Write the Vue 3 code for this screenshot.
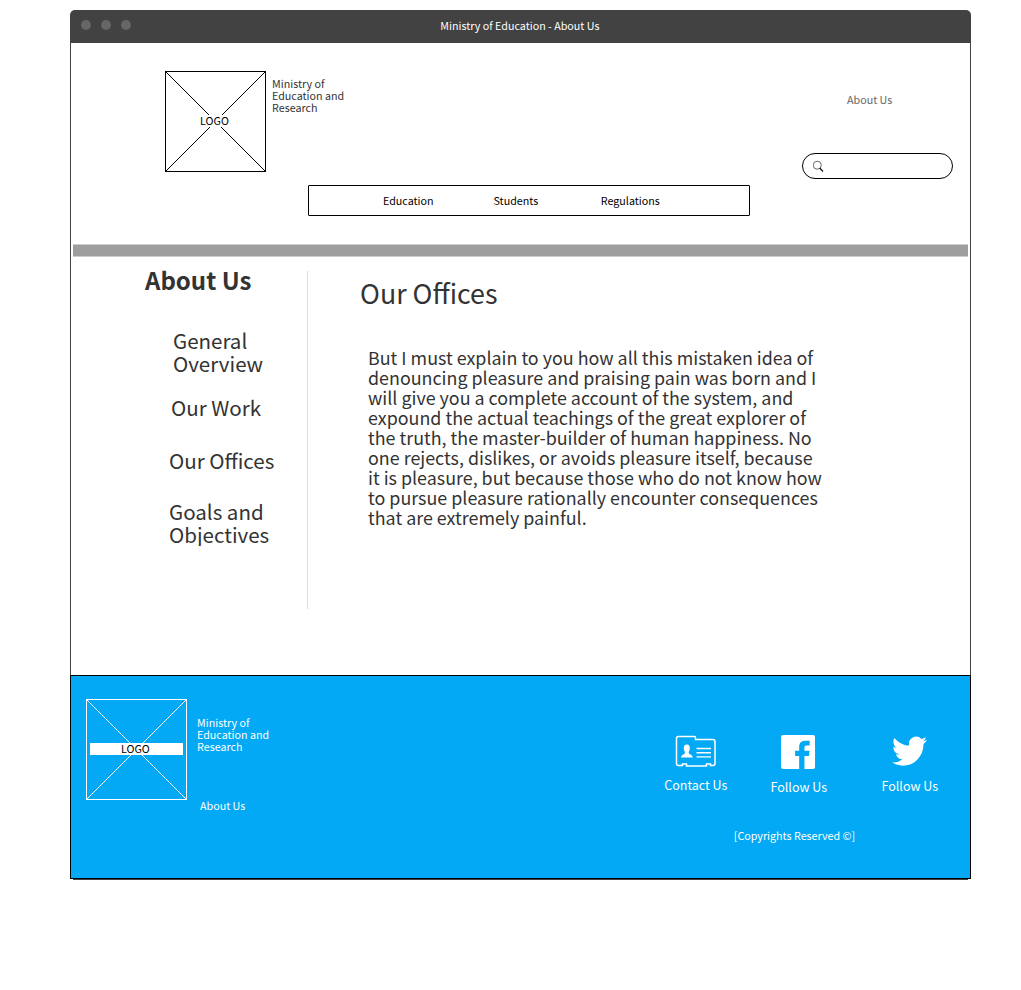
<script setup>
const nav = ['Education', 'Students', 'Regulations']
const sections = [
  { id: 'general', lines: ['General', 'Overview'] },
  { id: 'work', lines: ['Our Work'] },
  { id: 'offices', lines: ['Our Offices'] },
  { id: 'goals', lines: ['Goals and', 'Objectives'] },
]
const paragraph = [
  'But I must explain to you how all this mistaken idea of',
  'denouncing pleasure and praising pain was born and I',
  'will give you a complete account of the system, and',
  'expound the actual teachings of the great explorer of',
  'the truth, the master-builder of human happiness. No',
  'one rejects, dislikes, or avoids pleasure itself, because',
  'it is pleasure, but because those who do not know how',
  'to pursue pleasure rationally encounter consequences',
  'that are extremely painful.',
]
</script>

<template>
  <div class="window">
    <div class="titlebar">
      <div class="dots"><i></i><i></i><i></i></div>
      <span class="title">Ministry of Education - About Us</span>
    </div>

    <header class="header">
      <div class="top">
        <div class="logo">
          <svg width="101" height="101" viewBox="0 0 101 101">
            <path d="M.5 .5L100.5 100.5M100.5 .5L.5 100.5" />
            <rect x=".5" y=".5" width="100" height="100" />
          </svg>
          <span class="logo-label">LOGO</span>
        </div>
        <div class="org">Ministry of<br />Education and<br />Research</div>
        <div class="tools">
          <a class="about">About Us</a>
          <div class="search">
            <svg width="12" height="12" viewBox="0 0 12 12">
              <circle cx="4.3" cy="5.2" r="4" fill="none" stroke="#444" stroke-width=".8" />
              <path d="M6.7 8L10 11.5" stroke="#111" stroke-width="1.2" />
            </svg>
          </div>
        </div>
      </div>
      <nav class="nav">
        <a v-for="item in nav" :key="item">{{ item }}</a>
      </nav>
    </header>

    <main class="main">
      <div class="rule"></div>
      <div class="columns">
        <aside class="side">
          <h1>About Us</h1>
          <a v-for="s in sections" :key="s.id" :class="s.id">
            <span v-for="l in s.lines" :key="l">{{ l }}</span>
          </a>
        </aside>
        <div class="divider"></div>
        <article class="content">
          <h2>Our Offices</h2>
          <p><span v-for="l in paragraph" :key="l">{{ l }}</span></p>
        </article>
      </div>
    </main>

    <footer class="footer">
      <div class="logo light">
        <svg width="101" height="101" viewBox="0 0 101 101">
          <path d="M.5 .5L100.5 100.5M100.5 .5L.5 100.5" />
          <rect x=".5" y=".5" width="100" height="100" />
        </svg>
        <span class="logo-label">LOGO</span>
      </div>
      <div class="foot-org">
        <div>Ministry of<br />Education and<br />Research</div>
        <a>About Us</a>
      </div>
      <div class="foot-right">
        <div class="links">
          <a class="contact">
            <svg width="42" height="33" viewBox="0 0 42 33">
              <path d="M3.5 1.5H19.5Q20.5 1.5 20.5 3V4.5H38Q40 4.5 40 7V28.5Q40 30.5 38 30.5H35.5V29H31.5V31H11.5V29H7.5V30.5H3.5Q1.5 30.5 1.5 28.5V3.5Q1.5 1.5 3.5 1.5Z" fill="none" stroke="#fff" stroke-width="1.5" />
              <path d="M11.8 9.5C14.3 9.5 15 11.2 14.8 13.5C14.7 15.3 14 16.2 13.6 17.4C13.5 19.3 17.8 19.4 17.8 22.6H6C6 19.4 10.2 19.3 10 17.4C9.6 16.2 8.9 15.3 8.8 13.5C8.7 11.2 9.4 9.5 11.8 9.5Z" fill="#fff" />
              <path d="M21.5 13.5H36M21.5 17.7H36M21.5 21.9H36" stroke="#fff" stroke-width="1.4" />
            </svg>
            <span>Contact Us</span>
          </a>
          <a class="facebook">
            <svg width="35" height="35" viewBox="0 0 36 36">
              <path d="M2 0H33Q35 0 35 2V33Q35 35 33 35H24.1V21.5H28.8L29.4 16.2H24.1V13C24.1 11.4 24.7 10.7 26.4 10.7H29.5V6H25.2C20.8 6 18.7 8.3 18.7 12.2V16.2H14.5V21.5H18.7V35H2Q0 35 0 33V2Q0 0 2 0Z" fill="#fff" />
            </svg>
            <span>Follow Us</span>
          </a>
          <a class="twitter">
            <svg width="35" height="30" viewBox="0 1.8 24 20.2" preserveAspectRatio="none">
              <path d="M23.95 4.57a10 10 0 0 1-2.82.77 4.96 4.96 0 0 0 2.16-2.72c-.95.55-2 .95-3.13 1.18a4.92 4.92 0 0 0-8.38 4.48C7.69 8.1 4.07 6.13 1.64 3.16a4.82 4.82 0 0 0-.67 2.48c0 1.71.87 3.21 2.19 4.1a4.9 4.9 0 0 1-2.23-.62v.06a4.92 4.92 0 0 0 3.95 4.83 5 5 0 0 1-2.21.08 4.94 4.94 0 0 0 4.6 3.42A9.87 9.87 0 0 1 0 19.54a14 14 0 0 0 7.55 2.21c9.05 0 14-7.5 14-13.98 0-.21 0-.42-.02-.63a9.94 9.94 0 0 0 2.46-2.55z" fill="#fff" />
            </svg>
            <span>Follow Us</span>
          </a>
        </div>
        <div class="copy">[Copyrights Reserved ©]</div>
      </div>
    </footer>
    <div class="window-edge"></div>
  </div>
</template>

<style>
body { background: #fff; }
</style>

<style scoped>
* { box-sizing: border-box; }
.window {
  width: 901px;
  margin: 10px 0 0 70px;
  font-family: "Noto Sans CJK SC", "Noto Sans", sans-serif;
  font-size: 10.72px;
  line-height: 12px;
  color: #333;
  white-space: nowrap;
}
.titlebar {
  display: grid;
  grid-template-columns: 370px 1fr;
  height: 33px;
  background: #424242;
  border-radius: 5px 5px 0 0;
  color: #fff;
}
.dots { display: flex; gap: 10px; padding: 10px 0 0 11.4px; }
.dots i { width: 10px; height: 10px; border-radius: 50%; background: #666; }
.title { padding: 10px 0 0 .3px; }
.header, .main { border: solid #424242; border-width: 0 1px; }
.header { height: 201px; }
.top { display: flex; height: 142px; padding: 28px 17px 0 94px; }
.logo { display: grid; place-items: center; width: 101px; height: 101px; color: #000; }
.logo > * { grid-area: 1 / 1; }
.logo svg { fill: none; stroke: #000; }
.logo-label { background: #fff; margin: 0 0 2px -2px; }
.org { margin: 7px 0 0 6px; }
.tools { margin-left: auto; width: 151px; }
.about { display: block; margin: 23px 0 0 45px; color: #666; }
.search {
  display: flex;
  align-items: center;
  height: 26px;
  margin-top: 47px;
  padding-left: 10px;
  border: 1px solid #000;
  border-radius: 13px;
}
.nav {
  display: grid;
  grid-template-columns: 110.5px 107.3px 1fr;
  width: 442px;
  height: 31px;
  margin-left: 237px;
  padding: 9px 0 0 74px;
  border: 1px solid #000;
  border-radius: 1px;
  color: #000;
}
.main { height: 431px; padding: 0 2px; }
.rule { height: 13px; background: #9e9e9e; border: solid #ccc; border-width: 1px 0; }
.columns { display: flex; padding-top: 14px; }
.side {
  display: flex;
  flex-direction: column;
  width: 234px;
  padding-left: 72px;
  font-size: 20.54px;
  line-height: 23px;
}
.side a, .side span, .content span { display: block; }
.side a { overflow: hidden; }
h1 { margin: -5px 0 0; font-size: 24px; line-height: 28px; font-weight: 700; }
.general { margin: 35px 0 0 28px; }
.work { margin: 21px 0 0 26px; }
.offices { margin: 30px 0 0 24px; }
.goals { margin: 28px 0 0 24px; }
.divider { width: 1px; height: 338px; background: #ddd; }
.content { padding-left: 52px; }
h2 { margin: 6px 0 0; font-size: 26.8px; line-height: 32px; font-weight: 400; }
p { margin: 38px 0 0 8px; font-size: 17.89px; line-height: 20px; }
.footer {
  display: flex;
  height: 204px;
  padding: 23px 0 0 15px;
  border: 1px solid #000;
  background: #03a9f4;
  color: #fff;
}
.light svg { stroke: #fff; }
.light .logo-label { width: 93px; margin: 0 0 2px -1px; padding-left: 31.5px; }
.foot-org { margin: 18px 0 0 10px; }
.foot-org a { display: block; margin: 47px 0 0 3px; }
.foot-right { width: 320px; margin-left: 380.6px; padding-top: 36px; }
.links { display: flex; height: 66px; font-size: 12.5px; line-height: 16px; }
.links a { display: flex; flex-direction: column; align-items: center; }
.contact { width: 64px; margin-left: 14px; }
.contact span { margin-top: 9px; }
.facebook { width: 58px; margin-left: 42px; }
.facebook span { margin-top: 9px; }
.twitter { width: 58px; margin: 1px 0 0 53px; }
.twitter span { margin-top: 12px; }
.copy { margin: 29px 0 0 84px; }
.window-edge { height: 1px; margin: 0 3px; background: #424242; }
</style>
